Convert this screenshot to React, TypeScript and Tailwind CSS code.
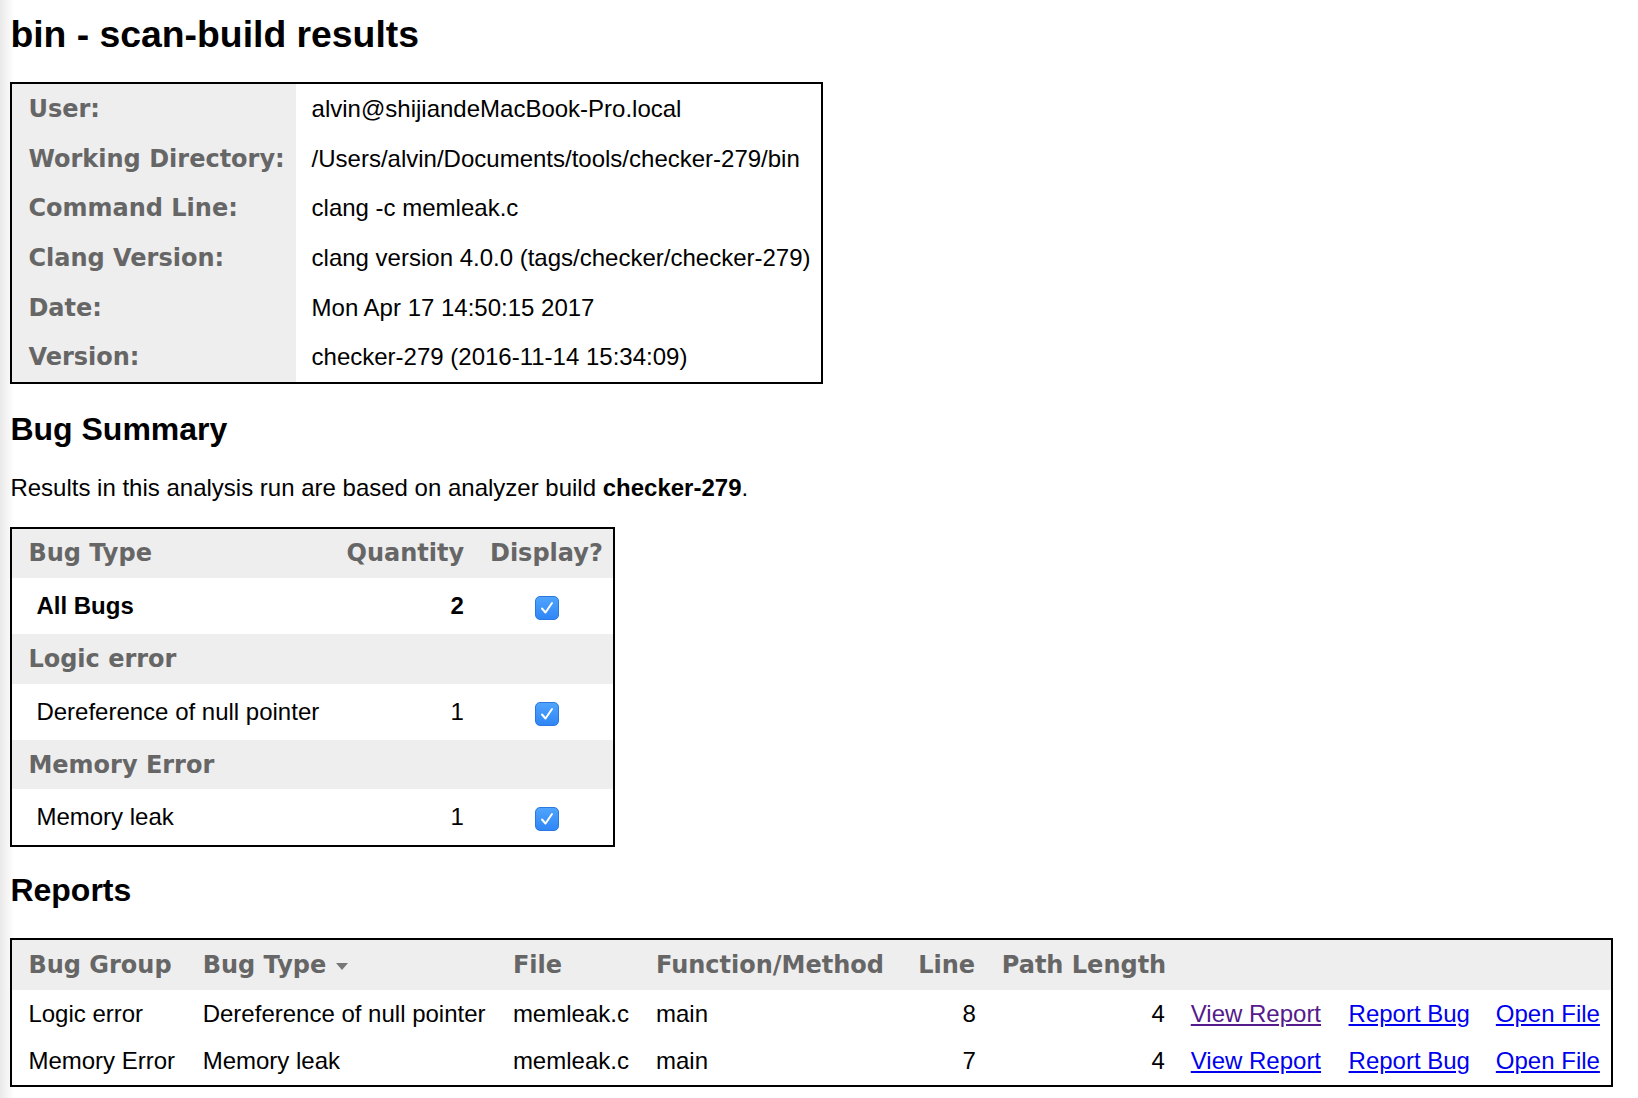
import React from 'react'

const thCls =
  "font-['DejaVu_Sans',Verdana,sans-serif] font-bold text-[24px] text-[#666666] bg-[#eeeeee] text-left whitespace-nowrap pl-4 pr-[10px] py-0 align-middle"
const tdCls = 'whitespace-nowrap pl-4 pr-[10px] py-0 align-middle'

const info: [string, string][] = [
  ['User:', 'alvin@shijiandeMacBook-Pro.local'],
  ['Working Directory:', '/Users/alvin/Documents/tools/checker-279/bin'],
  ['Command Line:', 'clang -c memleak.c'],
  ['Clang Version:', 'clang version 4.0.0 (tags/checker/checker-279)'],
  ['Date:', 'Mon Apr 17 14:50:15 2017'],
  ['Version:', 'checker-279 (2016-11-14 15:34:09)'],
]

const reports = [
  { group: 'Logic error', type: 'Dereference of null pointer', file: 'memleak.c', fn: 'main', line: 8, path: 4, visited: true },
  { group: 'Memory Error', type: 'Memory leak', file: 'memleak.c', fn: 'main', line: 7, path: 4, visited: false },
]

function Checkbox() {
  return (
    <span className="inline-flex items-center justify-center w-[24px] h-[24px] rounded-[5px] bg-[linear-gradient(#4fa4fc,#2f86f6)] border border-[#2a78e0] align-middle">
      <svg width="18" height="18" viewBox="0 0 18 18">
        <path d="M4 9.5 L7.5 13.5 L14 4" fill="none" stroke="#ffffff" strokeWidth="2" strokeLinecap="round" strokeLinejoin="round" />
      </svg>
    </span>
  )
}

export default function App() {
  return (
    <div className="min-h-screen bg-[linear-gradient(to_right,#e9e9e9_0px,#ffffff_14px)] pt-[12px] pl-[10.4px] font-['Liberation_Sans',Arial,sans-serif] text-[24px] text-black">
      <h1 className="text-[37.33px] font-bold leading-[44px]">bin - scan-build results</h1>

      {/* Info */}
      <table className="mt-[26px] w-[812.6px] table-fixed border-separate border-spacing-0 border-2 border-black">
        <tbody>
          {info.map(([k, v], i) => (
            <tr key={k} className="h-[49.7px]">
              <th className={thCls + (i === 0 ? ' w-[283.2px]' : '')}>{k}</th>
              <td className={tdCls + ' text-left leading-[28px]'}>{v}</td>
            </tr>
          ))}
        </tbody>
      </table>

      <h2 className="mt-[25.7px] text-[32px] font-bold leading-[38px]">Bug Summary</h2>
      <p className="mt-[26.5px] leading-[28px]">
        Results in this analysis run are based on analyzer build <b>checker-279</b>.
      </p>

      {/* Summary */}
      <table className="mt-[24.3px] w-[604.9px] table-fixed border-separate border-spacing-0 border-2 border-black">
        <thead>
          <tr className="h-[49px]">
            <th className={thCls + ' w-[318.2px]'}>Bug Type</th>
            <th className={thCls + ' w-[143.4px]'}>Quantity</th>
            <th className={thCls}>Display?</th>
          </tr>
        </thead>
        <tbody>
          <tr className="h-[56.6px]">
            <td className={tdCls + ' text-left pl-6 font-bold'}>All Bugs</td>
            <td className={tdCls + ' text-right font-bold'}>2</td>
            <td className={tdCls + ' text-center'}>
              <Checkbox />
            </td>
          </tr>
          <tr className="h-[49.5px]">
            <th colSpan={3} className={thCls}>Logic error</th>
          </tr>
          <tr className="h-[56.3px]">
            <td className={tdCls + ' text-left pl-6'}>Dereference of null pointer</td>
            <td className={tdCls + ' text-right'}>1</td>
            <td className={tdCls + ' text-center'}>
              <Checkbox />
            </td>
          </tr>
          <tr className="h-[49.3px]">
            <th colSpan={3} className={thCls}>Memory Error</th>
          </tr>
          <tr className="h-[55.3px]">
            <td className={tdCls + ' text-left pl-6'}>Memory leak</td>
            <td className={tdCls + ' text-right'}>1</td>
            <td className={tdCls + ' text-center'}>
              <Checkbox />
            </td>
          </tr>
        </tbody>
      </table>

      <h2 className="mt-[24.9px] text-[32px] font-bold leading-[38px]">Reports</h2>

      {/* Reports */}
      <table className="mt-[28.7px] w-[1603px] table-fixed border-separate border-spacing-0 border-2 border-black">
        <thead>
          <tr className="h-[49.7px]">
            <th className={thCls + ' w-[174.3px]'}>Bug Group</th>
            <th className={thCls + ' w-[310.2px]'}>
              <span className="inline-flex items-center">
                Bug Type
                <svg className="ml-[10px] mt-[3px]" width="12" height="7" viewBox="0 0 12 7">
                  <path d="M0 0 H12 L6 7 Z" fill="#777777" />
                </svg>
              </span>
            </th>
            <th className={thCls + ' w-[143.1px]'}>File</th>
            <th className={thCls + ' w-[262.2px]'}>Function/Method</th>
            <th className={thCls + ' w-[83.6px]'}>Line</th>
            <th className={thCls + ' w-[189px]'}>Path Length</th>
            <th className={thCls + ' w-[157.8px]'}></th>
            <th className={thCls + ' w-[147.3px]'}></th>
            <th className={thCls}></th>
          </tr>
        </thead>
        <tbody>
          {reports.map((r) => (
            <tr key={r.type} className="h-[47.5px]">
              <td className={tdCls + ' text-left'}>{r.group}</td>
              <td className={tdCls + ' text-left'}>{r.type}</td>
              <td className={tdCls + ' text-left'}>{r.file}</td>
              <td className={tdCls + ' text-left'}>{r.fn}</td>
              <td className={tdCls + ' text-right'}>{r.line}</td>
              <td className={tdCls + ' text-right'}>{r.path}</td>
              <td className={tdCls + ' text-left'}>
                <a href="#" className={'underline ' + (r.visited ? 'text-[#551a8b]' : 'text-[#0000ee]')}>
                  View Report
                </a>
              </td>
              <td className={tdCls + ' text-left'}>
                <a href="#" className="underline text-[#0000ee]">Report Bug</a>
              </td>
              <td className={tdCls + ' text-left'}>
                <a href="#" className="underline text-[#0000ee]">Open File</a>
              </td>
            </tr>
          ))}
        </tbody>
      </table>
    </div>
  )
}
